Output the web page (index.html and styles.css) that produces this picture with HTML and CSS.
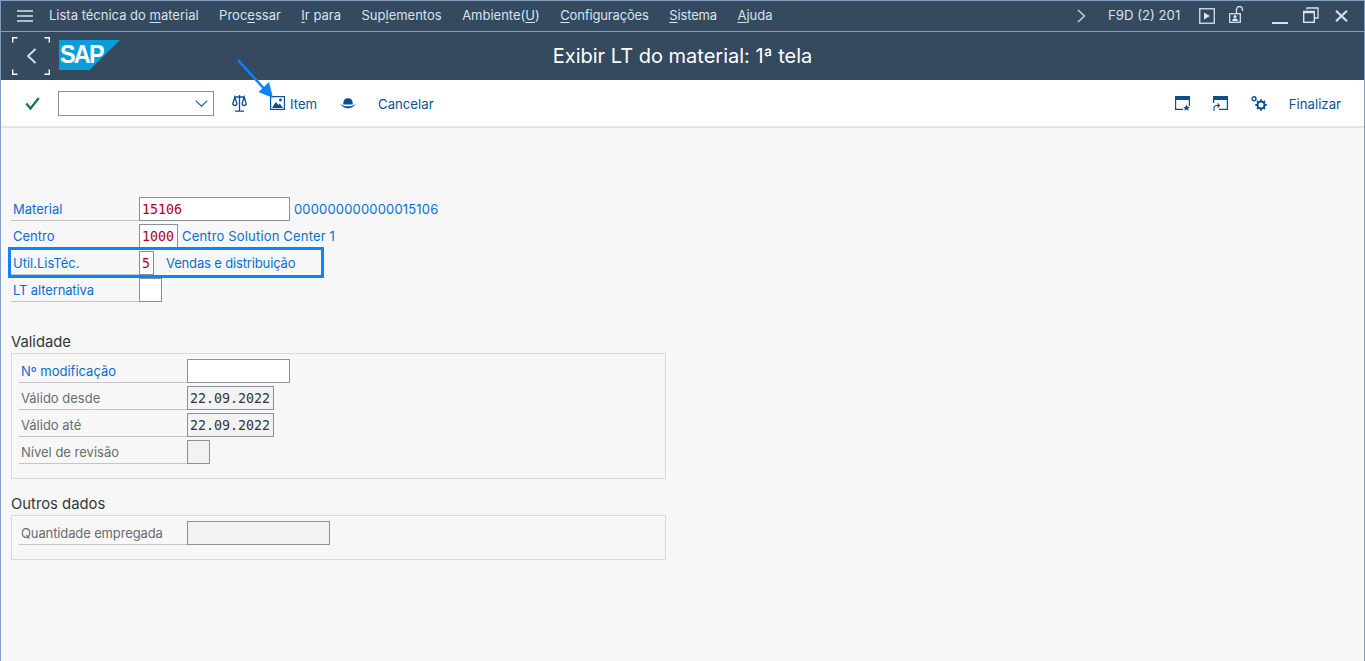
FILE: index.html
```html
<!DOCTYPE html>
<html lang="pt">
<head>
<meta charset="utf-8">
<title>Exibir LT do material: 1ª tela</title>
<link rel="stylesheet" href="styles.css">
</head>
<body>
<div class="window">
  <header class="menubar">
    <svg class="hamburger" width="16" height="12" viewBox="0 0 16 12"><path d="M0 1h16M0 6h16M0 11h16" stroke="#d5e3f2" stroke-width="1.500" fill="none"/></svg>
    <nav class="menu">
      <span>Lista técnica do <u>m</u>aterial</span>
      <span>Proc<u>e</u>ssar</span>
      <span><u>I</u>r para</span>
      <span>Sup<u>l</u>ementos</span>
      <span>Ambiente(<u>U</u>)</span>
      <span class="menu-tight"><u>C</u>onfigurações</span>
      <span class="menu-tight"><u>S</u>istema</span>
      <span><u>A</u>juda</span>
    </nav>
    <div class="sys">
      <svg class="sys-chevron" width="9" height="14" viewBox="0 0 9 14"><path d="M1 1l6.500 6L1 13" stroke="#d5e3f2" stroke-width="1.200" fill="none"/></svg>
      <span class="sysid">F9D (2) 201</span>
      <svg class="sys-play" width="16" height="16" viewBox="0 0 16 16"><rect x=".75" y=".75" width="14.500" height="14.500" fill="none" stroke="#d5e3f2" stroke-width="1.300"/><path d="M5 4.500v7l6-3.500z" fill="#d5e3f2"/></svg>
      <svg class="sys-lock" width="16" height="17" viewBox="0 0 16 17"><path d="M7.500 7V3.500a3 3 0 0 1 6 0V5" fill="none" stroke="#d5e3f2" stroke-width="1.300"/><rect x=".7" y="7.700" width="10.600" height="8.600" fill="none" stroke="#d5e3f2" stroke-width="1.300"/><circle cx="6" cy="10.500" r="1.500" fill="#d5e3f2"/><path d="M3 15c.3-2 1.500-2.800 3-2.800s2.700.8 3 2.800z" fill="#d5e3f2"/></svg>
      <svg class="sys-min" width="16" height="16" viewBox="0 0 16 16"><path d="M0 15h16" stroke="#d5e3f2" stroke-width="2"/></svg>
      <svg class="sys-restore" width="16" height="16" viewBox="0 0 16 16"><path d="M4 2.500V1h11v10h-3" fill="none" stroke="#d5e3f2" stroke-width="1.300"/><rect x=".7" y="4.700" width="10.600" height="10.600" fill="none" stroke="#d5e3f2" stroke-width="1.400"/><path d="M0 5h12" stroke="#d5e3f2" stroke-width="2.500"/></svg>
      <svg class="sys-close" width="13" height="12" viewBox="0 0 13 12"><path d="M1 .7l11 10.600M12 .7L1 11.300" stroke="#d5e3f2" stroke-width="2" fill="none"/></svg>
    </div>
  </header>

  <section class="titlebar">
    <div class="back">
      <svg width="38" height="38" viewBox="0 0 38 38">
        <path d="M.7 5.500V.7h4.800M32.500.7h4.800v4.800M.7 32.500v4.800h4.800M32.500 37.300h4.800v-4.800" stroke="#fff" stroke-width="1.400" fill="none"/>
        <path d="M23.500 12l-7.500 7 7.500 7" stroke="#d5e3f2" stroke-width="1.800" fill="none"/>
      </svg>
    </div>
    <div class="logo"><span class="logo-text">SAP</span></div>
    <h1>Exibir LT do material: 1ª tela</h1>
  </section>

  <section class="toolbar">
    <svg class="tb-check" width="15" height="13" viewBox="0 0 15 13"><path d="M1.300 6.500l4.200 5L13.800 1" stroke="#107e3e" stroke-width="2.300" fill="none"/></svg>
    <div class="combo">
      <svg width="13" height="7" viewBox="0 0 13 7"><path d="M.7.700l5.800 5.500L12.300.7" stroke="#0a5aa0" stroke-width="1.100" fill="none"/></svg>
    </div>
    <svg class="tb-scale" width="15" height="18" viewBox="0 0 15 18"><g fill="none" stroke="#0a4f92" stroke-width="1.300"><path d="M7.500 1v15.500M3 17.200h9M2.500 3h10M2.800 3L.7 10a2.300 2.300 0 0 0 4.300 0zM12.200 3L10 10a2.300 2.300 0 0 0 4.300 0z"/></g></svg>
    <svg class="tb-image" width="15" height="14" viewBox="0 0 15 14"><rect x=".6" y=".6" width="13.800" height="12.800" fill="none" stroke="#0a4f92" stroke-width="1.200"/><path d="M2 12l3.800-6 2.700 3 1.300-1.500L13 12z" fill="#0a4f92"/><circle cx="10.500" cy="4" r="1.400" fill="#0a4f92"/></svg>
    <span class="tb-text tb-item">Item</span>
    <svg class="tb-hat" width="16" height="11" viewBox="0 0 16 11"><path d="M3.200 6.500C3.200 2 5 .3 8 .3s4.800 1.700 4.800 6.200z" fill="#0a4f92"/><path d="M0 5.800C2 8.800 4.800 10.200 8 10.200S14 8.800 16 5.800C13.500 7.800 11 8.300 8 8.300S2.500 7.800 0 5.800z" fill="#0a4f92"/></svg>
    <span class="tb-text tb-cancel">Cancelar</span>
    <div class="tb-right">
      <svg width="15" height="15" viewBox="0 0 15 15"><path d="M0 0h15v4H0z" fill="#0a4f92"/><path d="M.6 4v9.400H8M14.400 4v6" fill="none" stroke="#0a4f92" stroke-width="1.200"/><path d="M11.500 8.500l1 2.200 2.300.2-1.700 1.500.5 2.300-2.100-1.200-2.100 1.200.5-2.300-1.700-1.500 2.300-.2z" fill="#0a4f92"/></svg>
      <svg width="15" height="15" viewBox="0 0 15 15"><path d="M0 0h15v4H0z" fill="#0a4f92"/><path d="M14.400 4v9.400H6M.6 4v3" fill="none" stroke="#0a4f92" stroke-width="1.200"/><path d="M1 15v-3a2.500 2.500 0 0 1 2.500-2.500H6M4.500 7.500l2 2-2 2" fill="none" stroke="#0a4f92" stroke-width="1.100"/></svg>
      <svg width="16" height="15" viewBox="0 0 16 15"><g fill="none" stroke="#0a4f92"><circle cx="10" cy="9" r="3.500" stroke-width="2"/><path d="M10 3.300v2M10 12.700v2M4.300 9h2M13.700 9h2M6 5l1.300 1.300M12.700 11.700L14 13M14 5l-1.300 1.300M7.300 11.700L6 13" stroke-width="1.800"/><circle cx="3" cy="2.800" r="2" stroke-width="1.400"/></g></svg>
      <span class="tb-text tb-finish">Finalizar</span>
    </div>
  </section>

  <main class="content">
    <div class="row">
      <label class="lbl lbl-link">Material</label>
      <div class="field field-18 val-key">15106</div>
      <span class="desc desc-wide">000000000000015106</span>
    </div>
    <div class="row">
      <label class="lbl lbl-link">Centro</label>
      <div class="field field-4 val-key">1000</div>
      <span class="desc desc-wide">Centro Solution Center 1</span>
    </div>
    <div class="row">
      <label class="lbl lbl-link">Util.LisTéc.</label>
      <div class="field field-1 val-key">5</div>
      <span class="desc desc-far">Vendas e distribuição</span>
    </div>
    <div class="row">
      <label class="lbl lbl-link lbl-tight">LT alternativa</label>
      <div class="field field-2"></div>
    </div>

    <h2 class="group-title group-first">Validade</h2>
    <div class="group group-validity">
      <div class="row">
        <label class="lbl lbl-inner lbl-link">Nº modificação</label>
        <div class="field field-mod"></div>
      </div>
      <div class="row">
        <label class="lbl lbl-inner lbl-off">Válido desde</label>
        <div class="field field-date field-off">22.09.2022</div>
      </div>
      <div class="row">
        <label class="lbl lbl-inner lbl-off">Válido até</label>
        <div class="field field-date field-off">22.09.2022</div>
      </div>
      <div class="row">
        <label class="lbl lbl-inner lbl-off">Nível de revisão</label>
        <div class="field field-2 field-off"></div>
      </div>
    </div>

    <h2 class="group-title group-second">Outros dados</h2>
    <div class="group group-other">
      <div class="row">
        <label class="lbl lbl-inner lbl-off lbl-tight">Quantidade empregada</label>
        <div class="field field-qty field-off"></div>
      </div>
    </div>
  </main>

  <div class="highlight"></div>
  <svg class="arrow" width="40" height="42" viewBox="0 0 40 42"><path d="M1 1L31 34" stroke="#0a84ff" stroke-width="2.500" fill="none"/><path d="M36 39L21.500 33 32 23z" fill="#0a84ff"/></svg>
</div>
</body>
</html>
```

FILE: styles.css
```css
* { box-sizing: border-box; }
html, body { margin: 0; padding: 0; height: 100%; overflow: hidden; }
body { font-family: "Inter", "Noto Sans", sans-serif; font-size: 13px; background: #f7f7f7; }

.window {
  position: relative;
  height: 661px;
  display: flex;
  flex-direction: column;
  border-left: 1px solid #7d9cc0;
  border-right: 1px solid #7d9cc0;
}

.menubar {
  height: 32px;
  flex: none;
  display: flex;
  align-items: center;
  background: #354a5f;
  color: #d5e3f2;
  border-top: 1px solid #7d9cc0;
  border-bottom: 1px solid #7d9cc0;
  font-size: 13px;
  padding: 0 0 1px 16px;
}
.hamburger { flex: none; margin-right: 16px; }
.menu { display: flex; gap: 20.500px; white-space: nowrap; margin-bottom: 1px; }
.menu u { text-underline-offset: 2px; }
.menu-tight { letter-spacing: -0.150px; }
.sys { margin-left: auto; display: flex; align-items: center; }
.sys-chevron { margin-right: 22px; }
.sysid { width: 91px; white-space: nowrap; font-size: 13.200px; margin-bottom: 1px; }
.sys-play { margin-right: 14px; }
.sys-lock { margin-right: 27px; margin-bottom: 3px; }
.sys-min { margin-right: 15px; }
.sys-restore { margin-right: 16px; margin-bottom: 1px; }
.sys-close { margin-right: 16px; }

.titlebar {
  height: 48px;
  flex: none;
  display: flex;
  align-items: center;
  position: relative;
  background: #354a5f;
  padding-left: 11px;
}
.back { width: 38px; height: 38px; flex: none; }
.back svg { display: block; }
.logo {
  flex: none;
  margin: 0 0 2px 9px;
  width: 61px;
  height: 30px;
  background: #0a9ddc;
  clip-path: polygon(0 0, 100% 0, 50% 100%, 0 100%);
  color: #fff;
  font-family: "Liberation Sans", sans-serif;
  font-weight: 700;
  font-size: 26px;
  line-height: 28px;
}
.logo-text {
  display: inline-block;
  letter-spacing: -2px;
  transform: scaleX(0.9);
  transform-origin: left center;
  margin-left: 1px;
}
.titlebar h1 {
  position: absolute;
  left: 0;
  right: 0;
  top: 0;
  margin: 0;
  text-align: center;
  font-size: 20px;
  font-weight: 400;
  line-height: 48px;
  color: #fff;
}

.toolbar {
  height: 48px;
  flex: none;
  display: flex;
  align-items: center;
  background: #fff;
  border-bottom: 2px solid #e4e4e4;
  padding-left: 24px;
  color: #0a5296;
}
.tb-check { margin-right: 18px; }
.combo {
  width: 156px;
  height: 25px;
  background: #fff;
  border: 1px solid #89919a;
  display: flex;
  align-items: center;
  justify-content: flex-end;
  padding-right: 5px;
  margin-right: 18px;
}
.tb-scale { margin-right: 23px; }
.tb-image { margin-right: 5px; }
.tb-text { font-size: 13.200px; white-space: nowrap; padding-top: 2px; }
.tb-item { width: 50px; }
.tb-hat { margin-right: 22px; }
.tb-right { margin-left: auto; display: flex; align-items: center; gap: 23px; padding-right: 23px; }
.tb-finish { margin-left: -1px; }

.content { flex: 1; padding: 69px 0 0 10px; background: #f7f7f7; width: 665px; }
.row { display: flex; align-items: stretch; height: 24px; margin-bottom: 3px; }
.row:last-child { margin-bottom: 0; }

.lbl {
  width: 128px;
  flex: none;
  border-bottom: 1px solid #c3c6c9;
  padding: 1px 0 0 2px;
  line-height: 23px;
  white-space: nowrap;
}
.lbl-link { color: #0a6ed1; }
.lbl-off { color: #6a6d70; }
.lbl-inner { width: 168px; }
.lbl-tight { letter-spacing: -0.120px; }

.field {
  flex: none;
  background: #fff;
  border: 1px solid #89919a;
  font-family: "DejaVu Sans Mono", monospace;
  font-size: 13.300px;
  line-height: 22px;
  padding: 1px 0 0 2px;
  color: #32363a;
}
.val-key { color: #b00020; }
.field-off { background: #f2f2f2; }
.field-18 { width: 151px; }
.field-4 { width: 39px; }
.field-1 { width: 15px; }
.field-2 { width: 23px; }
.field-mod { width: 103px; }
.field-date { width: 87px; }
.field-qty { width: 143px; }

.desc { color: #0a6ed1; line-height: 24px; white-space: nowrap; margin-left: 4px; }
.desc-wide { letter-spacing: 0.170px; }
.desc-far { margin-left: 12px; letter-spacing: -0.150px; }

.group-title {
  margin: 0;
  height: 20px;
  font-size: 14.800px;
  font-weight: 400;
  line-height: 19px;
  color: #32363a;
}
.group-first { margin-top: 31px; }
.group-second { margin-top: 16px; }

.group { width: 655px; border: 1px solid #d9d9d9; padding: 5px 0 14px 7px; }
.group-other { height: 45px; }

.highlight {
  position: absolute;
  left: 7px;
  top: 247px;
  width: 316px;
  height: 31px;
  border: 3px solid #0a84ff;
  pointer-events: none;
}
.arrow { position: absolute; left: 236px; top: 59px; }
```
